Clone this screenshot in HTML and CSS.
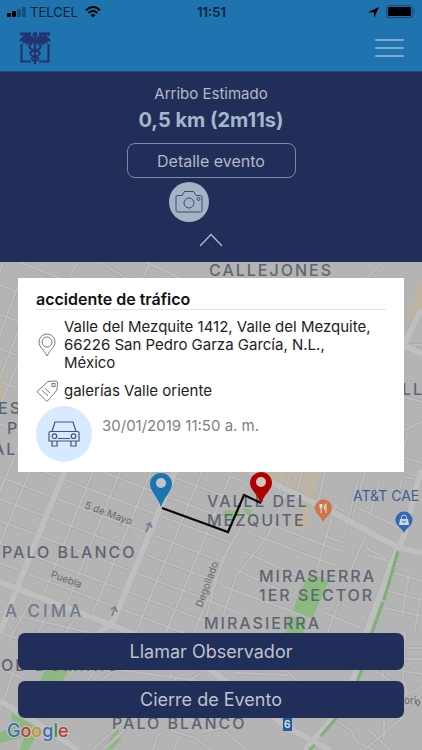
FILE: index.html
```html
<!DOCTYPE html>
<html lang="es">
<head>
<meta charset="utf-8">
<meta name="viewport" content="width=device-width, initial-scale=1">
<title>Arribo Estimado</title>
<link rel="stylesheet" href="styles.css">
</head>
<body>
<div class="app">
  <header class="top">
    <div class="status">
      <div class="carrier">
        <svg width="19" height="10" viewBox="0 0 19 10" aria-hidden="true"><rect x="0" y="6" width="4" height="4" rx="1"/><rect x="5" y="4" width="4" height="6" rx="1"/><g opacity=".3"><rect x="10" y="2" width="4" height="8" rx="1"/><rect x="15" y="0" width="4" height="10" rx="1"/></g></svg>
        <span>TELCEL</span>
        <svg class="wifi" width="16" height="12" viewBox="0 0 16 12" fill="none" stroke="#000" stroke-width="2.1" aria-hidden="true"><path d="M1 4.4C5-.1 11-.1 15 4.4M3.6 7C6 4.400 10 4.400 12.400 7"/><path d="M5.500 8.900C7 7.600 9 7.600 10.500 8.900L8 11.500Z" fill="#000" stroke="none"/></svg>
      </div>
      <time class="clock">11:51</time>
      <div class="power">
        <svg width="11" height="11" viewBox="0 0 11 11" aria-hidden="true"><path d="M11 0 6 11V5.500L0 5.200Z"/></svg>
        <svg width="30" height="14" viewBox="0 0 30 14" aria-hidden="true"><rect x=".6" y=".6" width="26" height="12" rx="3" fill="none" stroke="#174f7b" stroke-width="1.200"/><rect x="2" y="2" width="23" height="9" rx="1.500"/><path d="M28 4.500q2 2 0 4Z" fill="#174f7b"/></svg>
      </div>
    </div>
    <nav class="nav">
      <svg width="32" height="32" viewBox="0 0 32 32" fill="none" stroke="#23336b" role="img" aria-label="Logotipo"><path d="M2.500 12V29.500H12M20 29.500H29.500V12" stroke-width="2.200"/><path d="M1 .500H12V3.500H1ZM20 .500H31V3.500H20ZM0 9.500Q3 3 8 3Q12 3 15 6V13L13 10.500 12 14 9.500 11 8 14 6 10.500 4 12 3.500 9ZM32 9.500Q29 3 24 3Q20 3 17 6V13L19 10.500 20 14 22.500 11 24 14 26 10.500 28 12 28.500 9Z" fill="#23336b" stroke="none"/><path d="M16 3V32" stroke-width="2"/><circle cx="16" cy="2.500" r="2.500" fill="#23336b" stroke="none"/><path d="M13 12C9 13 9 17 16 18.500S22 23 16 24.500 13 28 16 29M19 12C23 13 23 17 16 18.500S10 23 16 24.500 19 28 16 29" stroke-width="2"/></svg>
      <button class="menu" type="button" aria-label="Menú"><span></span><span></span><span></span></button>
    </nav>
  </header>

  <section class="arrival">
    <p class="arrival-label">Arribo Estimado</p>
    <p class="arrival-value">0,5 km (2m11s)</p>
    <button class="detail" type="button">Detalle evento</button>
    <button class="camera" type="button" aria-label="Cámara">
      <svg width="28" height="24" viewBox="0 0 28 24" fill="none" stroke="#3d4a70" stroke-width="1"><path d="M2.500 5.500H7L9.500 1.500H18.500L21 5.500H25.500Q27 5.500 27 7V20.500Q27 22 25.500 22H2.500Q1 22 1 20.500V7Q1 5.500 2.500 5.500Z"/><circle cx="14" cy="13" r="5"/><circle cx="23.500" cy="9" r="1.500"/></svg>
    </button>
    <button class="collapse" type="button" aria-label="Contraer">
      <svg width="24" height="14" viewBox="0 0 24 14" fill="none" stroke="#b5b9c4" stroke-width="1.300"><path d="M1 13 12 1.500 23 13"/></svg>
    </button>
  </section>

  <main class="map-area">
    <svg class="map" viewBox="0 262 422 488" preserveAspectRatio="xMidYMid slice" role="img" aria-label="Mapa con la ruta">
      <defs>
        <clipPath id="grid-area"><path d="M0 472H215L245 480 202 662 0 584Z"/></clipPath>
        <g id="minor">
          <g clip-path="url(#grid-area)">
            <path d="M0 389 260 488M0 411 260 510M0 433 260 532M0 455 260 554M0 477 260 576M0 499 260 598M0 521 260 620M0 543 260 642M0 563 260 662"/>
            <path d="M-12 572 34 462M-34 572 12 462M40 603 97 462M65 608 124 462M90 620 155 462M136 632 206 462M162 642 232 472M186 652 260 472"/>
          </g>
          <path d="M0 285 20 293M0 315 20 322M0 349 20 356M0 382 20 389M0 424 20 432M3 262 -4 285M20 280 -2 340M20 326 0 378M20 358 0 406M20 443 0 492"/>
          <path d="M20 262 65 280M68 280 78 262M99 262 130 280M146 262 184 280M142 280 150 262M365 280 382 262"/>
          <path d="M404 345H422M404 397 422 402M404 430 422 422M404 457 422 463M407 434 404 452"/>
          <path d="M262 477 248 515 222 560 205 622M286 494 268 535 236 577 218 632M336 504 322 551 300 630M370 525 350 572 328 632M240 513 340 551M252 534 334 565M244 552 326 588M235 569 314 606M222 586 302 615M211 602 242 614M325 536 344 543M334 505 350 515M345 533 358 480M366 548 386 559M368 555 400 565M290 474 282 503M302 472 294 504M325 472 318 502M365 472 353 516M380 478 370 516M404 477 422 480M402 480 395 504M358 508 400 528M394 573 422 581M388 591 422 600M384 608 422 616M409 575 402 616M421 592 414 633M371 580 388 586M323 612 360 628"/>
          <path d="M0 612 92 633M34 595 8 642M53 604 26 655M74 620 65 633M0 633 20 639M0 668 22 678M14 671 0 710M95 670 82 690M116 670 100 681M120 670 200 681M205 670 188 681M168 670 176 681M219 670 216 681M236 673 288 675M285 670 298 681M354 670 348 681M374 670 391 681M389 633 382 681M404 648H422M404 659H422M404 671 422 674M405 633 402 700M404 696 422 686M404 709 422 694M405 682 407 695M384 718V740M402 718 364 750M369 730 390 750M331 718 351 730 356 742 374 750M187 718 213 730M167 718 172 731 195 738 211 750M202 732 222 728 244 748M179 738 174 750M153 750 157 736 165 731M137 718 103 750M128 718 92 750"/>
        </g>
        <g id="major">
          <path d="M0 582 70 609 165 646 203 664 288 728 330 750M65 470 17 588 0 633M176 470 113 622 98 634M250 472 325 508 397 547 422 553M421 470 404 536 392 562 366 633 352 684 336 714 305 750M421 310 404 345 422 354M390 633 382 655M0 701 39 724 78 750M180 633 210 652"/>
        </g>
      </defs>
      <path fill="#b4b4b4" d="M0 262H422V750H0Z"/>
      <path fill="#bdb5a2" d="M251 472H319L311 505 306 532 292 527 304 502ZM404 322 422 280V314L408 318ZM0 371 7 375 3 397 0 399ZM10 346 18 349V361L8 357Z"/>
      <g fill="#8cb982"><path d="M45 670H69L61 683H39ZM11 713 30 722 41 718 38 733 28 750H20L24 737 0 743V732L12 728ZM118 727 121 740 111 750H102Z"/></g>
      <use href="#minor" class="road edge"/>
      <use href="#minor" class="road fill"/>
      <use href="#major" class="road avenue-edge"/>
      <use href="#major" class="road avenue"/>
      <g fill="#8cb982"><path d="M310 573 329 581 312 618 293 611 298 596ZM288 615 306 622 303 633H286ZM225 510 240 511 235 520 222 515ZM242 508 253 510 248 516Z"/></g>
      <path class="median" d="M398 551 384 600M383 602 372 633M362 670 356 684M337 717 321 736M315 745 309 750"/>
      <g class="area">
        <text x="209" y="276">CALLEJONES</text>
        <text x="-2" y="414">ES</text><text x="7" y="434">P</text><text x="-7" y="455">AL</text>
        <text x="402" y="395">LL</text>
        <text x="207" y="507">VALLE DEL</text><text x="207" y="526">MEZQUITE</text>
        <text x="2" y="558">PALO BLANCO</text>
        <text x="259" y="582">MIRASIERRA</text><text x="259" y="601">1ER SECTOR</text>
        <text x="204" y="629">MIRASIERRA</text>
        <text x="1" y="671">OD DOMINIO</text>
        <text x="112" y="729">PALO BLANCO</text>
      </g>
      <text class="area wide" x="5" y="617">A CIMA</text>
      <g class="street">
        <text transform="translate(84 508) rotate(20)">5 de Mayo</text>
        <text transform="translate(50 577) rotate(20)">Puebla</text>
        <text transform="translate(202 608) rotate(-70)">Degollado</text>
        <text x="404" y="704">ori</text>
      </g>
      <path d="M146 532 150 524M146 525 150 523 152 528M112 616 115 608M111 609 115 607 117 612" fill="none" stroke="#7b7e94" stroke-width="1.700"/>
      <path d="M162 508 228 532 244 495 261 503" fill="none" stroke="#080808" stroke-width="2.200"/>
      <path d="M161 507C158 497 150 491 150 484A11 11 0 0 1 172 484C172 491 164 497 161 507Z" fill="#1b75b1"/><circle cx="161" cy="483" r="5" fill="#c2c4c5"/>
      <path d="M261 504C258 494 250 490 250 483A11 11 0 0 1 272 483C272 490 264 494 261 504Z" fill="#b20000"/><circle cx="261" cy="482" r="5" fill="#d0c6c3"/>
      <path d="M323 522C321 516 315 514 315 508A8.500 8.500 0 0 1 332 508C332 514 326 516 323 522Z" fill="#cc7547"/><path d="M320 504V507Q321 508 322 507V504M321 504V513M326 513V504Q324 505 324.500 509H326" stroke="#ddd" fill="none" stroke-width="1.100"/>
      <path d="M404 533C402 528 395.500 526 395.500 520A8.500 8.500 0 0 1 412.500 520C412.500 526 406 528 404 533Z" fill="#3268b4"/><path d="M400 519H408L409 525H399Z" fill="#ced5df"/><path d="M401.500 519V517.500A2.500 2.500 0 0 1 406.500 517.500V519" fill="none" stroke="#ced5df"/><path d="M402 521Q404 524 406 521" fill="none" stroke="#3268b4"/>
      <text class="place" x="353" y="501">AT&amp;T CAE</text>
      <path fill="#245ca0" d="M283 717H292V731H283Z"/><text class="route" x="284" y="728">6</text>
      <path d="M417 704Q415 701 417 700T420 703L418 706Z" fill="none" stroke="#666"/>
      <text class="google" x="7" y="737"><tspan fill="#3c6eb5">G</tspan><tspan fill="#bd3e35">o</tspan><tspan fill="#c5942a">o</tspan><tspan fill="#3c6eb5">g</tspan><tspan fill="#388b4b">l</tspan><tspan fill="#bd3e35">e</tspan></text>
    </svg>

    <article class="card">
      <h1>accidente de tráfico</h1>
      <div class="row">
        <svg width="22" height="24" viewBox="0 0 22 24" fill="none" stroke="#777b84" stroke-width="1" aria-hidden="true"><path d="M11 23C8 17 3 14 3 9A8 8 0 0 1 19 9C19 14 14 17 11 23Z"/><circle cx="11" cy="9" r="5"/></svg>
        <p>Valle del Mezquite 1412, Valle del Mezquite, 66226 San Pedro Garza García, N.L., México</p>
      </div>
      <div class="row">
        <svg width="22" height="22" viewBox="0 0 22 22" fill="none" stroke="#777b84" stroke-width="1" aria-hidden="true"><path d="M1 11.500 12 1.500 19.500 1Q21.500 1 21.500 3L21 10 11 21.500Z"/><rect x="16" y="3.500" width="3" height="3"/><path d="M6 10.500 12 16M9 8.500 14 13"/></svg>
        <p>galerías Valle oriente</p>
      </div>
      <div class="when">
        <span class="vehicle"><svg width="32" height="26" viewBox="0 0 32 26" fill="none" stroke="#465480" stroke-width="1.200" aria-hidden="true"><path d="M4 10.500 7 1H25L28 10.500M2.500 10.500H29.500Q31 10.500 31 12V20H1V12Q1 10.500 2.500 10.500ZM4 20V25H9V20M23 20V25H28V20M10 17.500H22"/><circle cx="6.500" cy="15.200" r="2.300"/><circle cx="25.500" cy="15.200" r="2.300"/></svg></span>
        <time datetime="2019-01-30T11:50">30/01/2019 11:50 a. m.</time>
      </div>
    </article>

    <div class="actions">
      <button type="button">Llamar Observador</button>
      <button type="button">Cierre de Evento</button>
    </div>
  </main>
</div>
</body>
</html>
```
FILE: styles.css
```css
* { box-sizing: border-box; }
body { margin: 0; font-family: Inter, "Liberation Sans", sans-serif; color: #222; }
p, h1 { margin: 0; }
button { font: inherit; border: 0; padding: 0; background: none; cursor: pointer; }
svg { display: block; flex: none; }

.app { display: flex; flex-direction: column; min-height: 100vh; }

.top { background: #1f74af; border-bottom: 1px solid #214a82; }
.status { display: grid; grid-template-columns: 1fr auto 1fr; align-items: center; height: 24px; padding: 0 6px 0 7px; font-size: 13px; color: #062238; }
.carrier { display: flex; align-items: center; gap: 4px; }
.wifi { margin-left: 3px; }
.clock { font-weight: 600; }
.power { display: flex; align-items: center; justify-content: flex-end; gap: 7px; }
.nav { display: flex; align-items: center; justify-content: space-between; height: 47px; padding: 0 18px 0 19px; }
.menu { display: flex; flex-direction: column; gap: 6px; width: 29px; }
.menu span { height: 2px; background: #80a9cb; border-radius: 1px; }

.arrival { display: flex; flex-direction: column; align-items: center; min-height: 190px; padding-top: 11px; background: #212e59; color: #b5b9c4; }
.arrival-label { font-size: 15px; line-height: 22px; }
.arrival-value { font-size: 20px; line-height: 30px; font-weight: 700; color: #a4b7c9; }
.detail { width: 169px; height: 35px; margin-top: 8px; border: 1px solid #82879d; border-radius: 8px; font-size: 16px; color: #b5b9c4; }
.camera { display: grid; place-items: center; width: 40px; height: 40px; margin: 4px 45px 0 0; border-radius: 50%; background: #a3b5c5; }
.collapse { margin-top: 11px; }

.map-area { position: relative; flex: 1; display: flex; flex-direction: column; justify-content: space-between; gap: 24px; padding: 16px 18px 32px; background: #b4b4b4; }
.map { position: absolute; inset: 0; width: 100%; height: 100%; }
.road { fill: none; stroke-linejoin: round; }
.edge { stroke: #acacac; stroke-width: 4; }
.fill { stroke: #bdbdbd; stroke-width: 2; }
.avenue-edge { stroke: #b0b0b0; stroke-width: 8; }
.avenue { stroke: #bfbfbf; stroke-width: 6; }
.median { fill: none; stroke: #81ae79; stroke-width: 3; }
.area { font-size: 16px; font-weight: 500; letter-spacing: 2px; fill: #5d6672; }
.wide { font-size: 17px; letter-spacing: 3px; fill: #707b8c; }
.street { font-size: 10px; fill: #696969; }
.place { font-size: 14px; fill: #3b5f92; }
.route { font-size: 10px; font-weight: 700; fill: #d8dde5; }
.google { font-size: 18px; font-weight: 500; stroke: #c4c4c4; stroke-width: 2px; paint-order: stroke; }

.card { position: relative; min-height: 194px; padding: 12px 18px 10px; background: #fff; }
.card h1 { padding-bottom: 1px; border-bottom: 1px solid #e2e4ec; font-size: 16px; line-height: 18px; font-weight: 600; color: #111; }
.row { display: flex; align-items: center; gap: 6px; margin-top: 8px; padding-right: 8px; font-size: 15px; line-height: 18px; }
.when { display: flex; gap: 10px; margin-top: 4px; font-size: 15px; line-height: 18px; color: #7c7f88; }
.when time { padding-top: 11px; }
.vehicle { display: grid; place-items: center; width: 56px; height: 56px; border-radius: 50%; background: #d8eaff; }

.actions { position: relative; display: flex; flex-direction: column; gap: 11px; }
.actions button { height: 37px; border-radius: 7px; background: #212e59; color: #bfc2cb; font-size: 18px; }
```
